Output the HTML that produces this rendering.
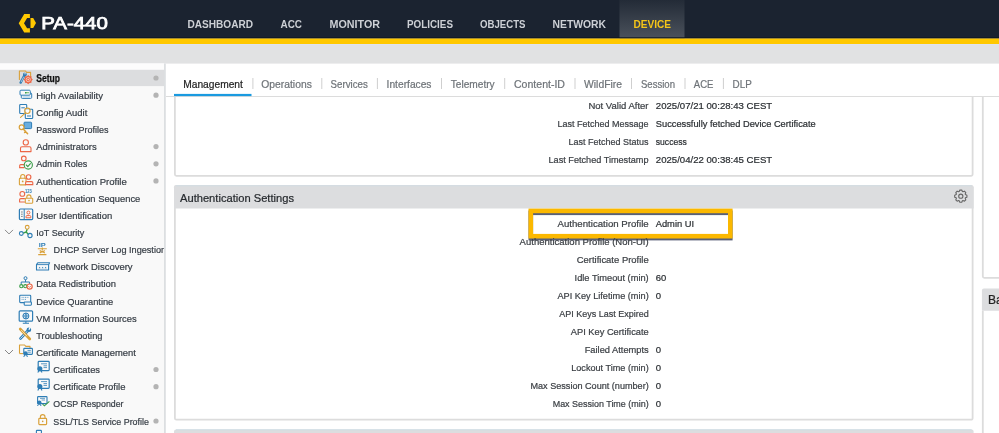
<!DOCTYPE html>
<html><head><meta charset="utf-8"><title>PA-440</title>
<style>html,body{margin:0;padding:0;background:#fff;width:999px;height:433px;overflow:hidden}svg text{font-family:"Liberation Sans", sans-serif}svg{will-change:transform;transform:translateZ(0)}</style>
</head><body><svg width="999" height="433" viewBox="0 0 999 433" style="display:block"><rect x="0" y="0" width="999" height="38.5" fill="#1b2330"/>
<defs><linearGradient id="devg" x1="0" y1="0" x2="0" y2="1"><stop offset="0" stop-color="#232b37"/><stop offset="1" stop-color="#4b525c"/></linearGradient></defs>
<rect x="619.5" y="0" width="65" height="38.5" fill="url(#devg)"/>
<rect x="0" y="37.3" width="999" height="1.2" fill="#0f1726"/>
<rect x="0" y="38.5" width="999" height="5.5" fill="#ffc800"/>
<rect x="0" y="44" width="999" height="1" fill="#dfe3ee"/>
<rect x="0" y="45" width="999" height="18.6" fill="#e1e2e3"/>
<polygon points="24.2,14 29.9,14 29.9,18.1 27.1,18.1 24,23.2 27.1,28.2 29.9,28.2 29.9,32.6 24.2,32.6 18.7,23.2" fill="#ffc800"/>
<polygon points="30.5,18 33.2,18 36,23.1 33.2,28.1 30.5,28.1" fill="#ffc800"/>
<text x="41.2" y="29.0" font-size="16.0" fill="#ffffff" text-anchor="start" textLength="66.6" lengthAdjust="spacingAndGlyphs" stroke="#fff" stroke-width="0.75">PA-440</text>
<text x="187.4" y="28.4" font-size="11.0" fill="#cdd0d5" text-anchor="start" textLength="65.6" lengthAdjust="spacingAndGlyphs" font-weight="bold">DASHBOARD</text>
<text x="280.5" y="28.4" font-size="11.0" fill="#cdd0d5" text-anchor="start" textLength="21.5" lengthAdjust="spacingAndGlyphs" font-weight="bold">ACC</text>
<text x="329.5" y="28.4" font-size="11.0" fill="#cdd0d5" text-anchor="start" textLength="50.5" lengthAdjust="spacingAndGlyphs" font-weight="bold">MONITOR</text>
<text x="407" y="28.4" font-size="11.0" fill="#cdd0d5" text-anchor="start" textLength="46.0" lengthAdjust="spacingAndGlyphs" font-weight="bold">POLICIES</text>
<text x="480" y="28.4" font-size="11.0" fill="#cdd0d5" text-anchor="start" textLength="45.5" lengthAdjust="spacingAndGlyphs" font-weight="bold">OBJECTS</text>
<text x="552.5" y="28.4" font-size="11.0" fill="#cdd0d5" text-anchor="start" textLength="53.5" lengthAdjust="spacingAndGlyphs" font-weight="bold">NETWORK</text>
<text x="633.4" y="28.4" font-size="11.0" fill="#f5c518" text-anchor="start" textLength="37.6" lengthAdjust="spacingAndGlyphs" font-weight="bold">DEVICE</text>
<rect x="0" y="63.6" width="164" height="370" fill="#f9f9f9"/>
<rect x="0" y="63.6" width="164" height="6.4" fill="#fcfcfc"/>
<rect x="164" y="63.6" width="1.8" height="370" fill="#dcdfe1"/>
<rect x="0" y="69.8" width="164" height="16.3" fill="#dcdddf"/>
<clipPath id="sbclip"><rect x="0" y="63" width="164" height="370"/></clipPath>
<g clip-path="url(#sbclip)">
<text x="36.2" y="81.6" font-size="10" fill="#111111" text-anchor="start" textLength="23.8" lengthAdjust="spacingAndGlyphs" font-weight="bold" stroke="#111" stroke-width="0.25">Setup</text>
<circle cx="156" cy="78.0" r="2.6" fill="#b4b4b4"/>
<text x="36.3" y="98.75" font-size="9.9" fill="#363d45" text-anchor="start" textLength="66.7" lengthAdjust="spacingAndGlyphs" stroke="#363d45" stroke-width="0.22">High Availability</text>
<circle cx="156" cy="95.2" r="2.6" fill="#b4b4b4"/>
<text x="36.3" y="115.89999999999999" font-size="9.9" fill="#363d45" text-anchor="start" textLength="51.0" lengthAdjust="spacingAndGlyphs" stroke="#363d45" stroke-width="0.22">Config Audit</text>
<text x="36.3" y="133.04999999999998" font-size="9.9" fill="#363d45" text-anchor="start" textLength="72.2" lengthAdjust="spacingAndGlyphs" stroke="#363d45" stroke-width="0.22">Password Profiles</text>
<text x="36.3" y="150.2" font-size="9.9" fill="#363d45" text-anchor="start" textLength="60.4" lengthAdjust="spacingAndGlyphs" stroke="#363d45" stroke-width="0.22">Administrators</text>
<circle cx="156" cy="146.6" r="2.6" fill="#b4b4b4"/>
<text x="36.3" y="167.35" font-size="9.9" fill="#363d45" text-anchor="start" textLength="51.0" lengthAdjust="spacingAndGlyphs" stroke="#363d45" stroke-width="0.22">Admin Roles</text>
<circle cx="156" cy="163.8" r="2.6" fill="#b4b4b4"/>
<text x="36.3" y="184.5" font-size="9.9" fill="#363d45" text-anchor="start" textLength="90.5" lengthAdjust="spacingAndGlyphs" stroke="#363d45" stroke-width="0.22">Authentication Profile</text>
<circle cx="156" cy="180.9" r="2.6" fill="#b4b4b4"/>
<text x="36.3" y="201.64999999999998" font-size="9.9" fill="#363d45" text-anchor="start" textLength="104.0" lengthAdjust="spacingAndGlyphs" stroke="#363d45" stroke-width="0.22">Authentication Sequence</text>
<text x="36.3" y="218.79999999999998" font-size="9.9" fill="#363d45" text-anchor="start" textLength="76.0" lengthAdjust="spacingAndGlyphs" stroke="#363d45" stroke-width="0.22">User Identification</text>
<text x="36.3" y="235.95" font-size="9.9" fill="#363d45" text-anchor="start" textLength="47.9" lengthAdjust="spacingAndGlyphs" stroke="#363d45" stroke-width="0.22">IoT Security</text>
<text x="53.6" y="253.1" font-size="9.9" fill="#363d45" text-anchor="start" textLength="112.5" lengthAdjust="spacingAndGlyphs" stroke="#363d45" stroke-width="0.22">DHCP Server Log Ingestion</text>
<text x="53.6" y="270.25" font-size="9.9" fill="#363d45" text-anchor="start" textLength="79.0" lengthAdjust="spacingAndGlyphs" stroke="#363d45" stroke-width="0.22">Network Discovery</text>
<text x="36.3" y="287.4" font-size="9.9" fill="#363d45" text-anchor="start" textLength="79.7" lengthAdjust="spacingAndGlyphs" stroke="#363d45" stroke-width="0.22">Data Redistribution</text>
<text x="36.3" y="304.54999999999995" font-size="9.9" fill="#363d45" text-anchor="start" textLength="77.0" lengthAdjust="spacingAndGlyphs" stroke="#363d45" stroke-width="0.22">Device Quarantine</text>
<text x="36.3" y="321.69999999999993" font-size="9.9" fill="#363d45" text-anchor="start" textLength="100.3" lengthAdjust="spacingAndGlyphs" stroke="#363d45" stroke-width="0.22">VM Information Sources</text>
<text x="36.3" y="338.85" font-size="9.9" fill="#363d45" text-anchor="start" textLength="66.2" lengthAdjust="spacingAndGlyphs" stroke="#363d45" stroke-width="0.22">Troubleshooting</text>
<text x="36.3" y="356.0" font-size="9.9" fill="#363d45" text-anchor="start" textLength="99.6" lengthAdjust="spacingAndGlyphs" stroke="#363d45" stroke-width="0.22">Certificate Management</text>
<text x="53.3" y="373.15" font-size="9.9" fill="#363d45" text-anchor="start" textLength="46.7" lengthAdjust="spacingAndGlyphs" stroke="#363d45" stroke-width="0.22">Certificates</text>
<circle cx="156" cy="369.5" r="2.6" fill="#b4b4b4"/>
<text x="53.3" y="390.29999999999995" font-size="9.9" fill="#363d45" text-anchor="start" textLength="72.2" lengthAdjust="spacingAndGlyphs" stroke="#363d45" stroke-width="0.22">Certificate Profile</text>
<circle cx="156" cy="386.7" r="2.6" fill="#b4b4b4"/>
<text x="53.3" y="407.44999999999993" font-size="9.9" fill="#363d45" text-anchor="start" textLength="70.2" lengthAdjust="spacingAndGlyphs" stroke="#363d45" stroke-width="0.22">OCSP Responder</text>
<text x="53.3" y="424.6" font-size="9.9" fill="#363d45" text-anchor="start" textLength="95.7" lengthAdjust="spacingAndGlyphs" stroke="#363d45" stroke-width="0.22">SSL/TLS Service Profile</text>
<circle cx="156" cy="421.0" r="2.6" fill="#b4b4b4"/>
<path d="M19.4,79.5 V71 H25.5 L26.6,72.4 H30.6 V76.5" stroke="#d9a13a" stroke-width="1.1" fill="none" stroke-linecap="round" stroke-linejoin="round"/>
<path d="M24.3,75.5 L20.6,82.6" stroke="#2e7db5" stroke-width="2.4" stroke-linecap="round" fill="none"/>
<path d="M23.6,77 L21.2,81.8" stroke="#dce8f0" stroke-width="0.7" stroke-linecap="round" fill="none"/>
<circle cx="24.9" cy="74.4" r="1.9" fill="#2e7db5"/>
<path d="M25.2,72.2 L24.9,74.4" stroke="#dcdcdc" stroke-width="1.1"/>
<polygon points="32.80,79.60 31.53,80.98 31.45,82.85 29.58,82.93 28.20,84.20 26.82,82.93 24.95,82.85 24.87,80.98 23.60,79.60 24.87,78.22 24.95,76.35 26.82,76.27 28.20,75.00 29.58,76.27 31.45,76.35 31.53,78.22" fill="#ec6646"/>
<circle cx="28.2" cy="79.6" r="2.1" fill="none" stroke="#fbd0c4" stroke-width="0.8"/>
<circle cx="28.2" cy="79.6" r="0.8" fill="#fbd0c4"/>
<rect x="21.3" y="93" width="10.4" height="5.4" rx="1" fill="#f9f9f9" stroke="#2e7db5" stroke-width="1"/>
<path d="M22.6,96.9 H30.4" stroke="#9cc3df" stroke-width="0.8"/>
<rect x="20" y="90.2" width="10.3" height="5" rx="1" fill="#f9f9f9" stroke="#2e7db5" stroke-width="1"/>
<rect x="25" y="92.1" width="4" height="1.2" fill="#7cc27f"/>
<rect x="25" y="92" width="1.4" height="1.4" fill="#3a9d4a"/>
<rect x="19.7" y="104.5" width="7" height="9" rx="0.8" stroke="#2e7db5" stroke-width="1.1" fill="none" stroke-linecap="round" stroke-linejoin="round"/>
<rect x="21.3" y="107.3" width="3.5" height="1" fill="#2e7db5"/>
<rect x="25.3" y="109.3" width="7.4" height="9.2" rx="0.8" fill="#f9f9f9" stroke="#2e7db5" stroke-width="1.1"/>
<rect x="27" y="115.5" width="4" height="1" fill="#2e7db5"/>
<circle cx="27.4" cy="110.8" r="2.7" fill="#fff" fill-opacity="0.7" stroke="#d9a13a" stroke-width="1.1"/>
<path d="M25.5,112.8 L20.5,117.4" stroke="#d9a13a" stroke-width="1.1" fill="none" stroke-linecap="round" stroke-linejoin="round"/>
<rect x="24" y="122.2" width="7.6" height="6.4" rx="0.8" fill="#6aaee0" stroke="#2e7db5" stroke-width="1"/>
<circle cx="21.6" cy="127.2" r="2.4" fill="#f9f9f9" stroke="#d9a13a" stroke-width="1.2"/>
<path d="M23.3,128.9 L27.6,133.8 M25.6,131.3 L24.6,132.4" stroke="#d9a13a" stroke-width="1.5" fill="none" stroke-linecap="round"/>
<circle cx="25.8" cy="142.4" r="2.6" stroke="#ec6646" stroke-width="1.1" fill="none" stroke-linecap="round" stroke-linejoin="round"/>
<path d="M20.5,151.6 V148.2 Q20.5,146.8 22,146.8 H29.6 Q31,146.8 31,148.2 V151.6 Z" stroke="#ec6646" stroke-width="1.1" fill="none" stroke-linecap="round" stroke-linejoin="round"/>
<circle cx="23.8" cy="158.4" r="2.3" stroke="#ec6646" stroke-width="1.1" fill="none" stroke-linecap="round" stroke-linejoin="round"/>
<path d="M19.7,167.6 V165.6 Q19.7,164.6 20.8,164.6 H25" stroke="#ec6646" stroke-width="1.1" fill="none" stroke-linecap="round" stroke-linejoin="round"/>
<path d="M19.7,167.6 H24.2" stroke="#ec6646" stroke-width="1.1" fill="none" stroke-linecap="round" stroke-linejoin="round"/>
<circle cx="28.3" cy="165" r="4.1" fill="#f9f9f9" stroke="#3a9d4a" stroke-width="1.1"/>
<path d="M26.3,165 L27.8,166.6 L30.4,163.6" stroke="#3a9d4a" stroke-width="1.1" fill="none" stroke-linecap="round" stroke-linejoin="round"/>
<path d="M20.7,178.3 V176.6 A2.1,2.1 0 0 1 24.9,176.6 V178.3" stroke="#d9a13a" stroke-width="1.1" fill="none" stroke-linecap="round" stroke-linejoin="round"/>
<rect x="19.4" y="178.3" width="6.6" height="6.6" rx="0.6" stroke="#d9a13a" stroke-width="1.1" fill="none" stroke-linecap="round" stroke-linejoin="round"/>
<circle cx="22.7" cy="181.4" r="0.9" fill="#d9a13a"/>
<circle cx="28.6" cy="177" r="2.3" stroke="#ec6646" stroke-width="1.1" fill="none" stroke-linecap="round" stroke-linejoin="round"/>
<path d="M25.6,184.6 V182.8 Q25.6,181.6 26.8,181.6 H31.6 Q32.8,181.6 32.8,182.8 V184.6 Z" fill="#f9f9f9" stroke="#ec6646" stroke-width="1.1"/>
<circle cx="22.3" cy="193.9" r="2.4" stroke="#ec6646" stroke-width="1.1" fill="none" stroke-linecap="round" stroke-linejoin="round"/>
<path d="M24.5,198.6 H20.8 Q19.6,198.6 19.6,199.8 V202 H24.5" stroke="#ec6646" stroke-width="1.1" fill="none" stroke-linecap="round" stroke-linejoin="round"/>
<path d="M26.8,198.2 V197 A2.1,2.1 0 0 1 31,197 V198.2" stroke="#d9a13a" stroke-width="1.1" fill="none" stroke-linecap="round" stroke-linejoin="round"/>
<rect x="25.3" y="198.2" width="7.4" height="5" rx="0.6" fill="#f9f9f9" stroke="#d9a13a" stroke-width="1.1"/>
<circle cx="29" cy="200.6" r="0.8" fill="#d9a13a"/>
<text x="25" y="193.4" font-size="5" font-weight="bold" fill="#2e7db5" textLength="6.8" lengthAdjust="spacingAndGlyphs">123</text>
<rect x="19.4" y="209" width="13.3" height="10.6" rx="1" stroke="#2e7db5" stroke-width="1.2" fill="none"/>
<path d="M24.2,209 V219.6" stroke="#2e7db5" stroke-width="1"/>
<path d="M21.2,212 H22.6 M21.2,214.2 H22.6 M21.2,216.4 H22.6" stroke="#3a4a5a" stroke-width="0.8"/>
<circle cx="28.4" cy="212.6" r="1.5" stroke="#ec6646" stroke-width="1" fill="none"/>
<path d="M26,217.8 V216.6 Q26,215.6 27,215.6 H29.8 Q30.8,215.6 30.8,216.6 V217.8 Z" stroke="#ec6646" stroke-width="1" fill="none"/>
<path d="M26.2,232 L27.2,229 M26.2,232 L22.4,233.3 M26.2,232 L28.6,234.6" stroke="#3a9d4a" stroke-width="1.4"/>
<circle cx="27.2" cy="227.3" r="1.9" fill="#f9f9f9" stroke="#d9a13a" stroke-width="1.1"/>
<circle cx="21.3" cy="233.5" r="1.9" fill="#f9f9f9" stroke="#2e7db5" stroke-width="1.1"/>
<circle cx="30" cy="235.5" r="2.1" fill="#f9f9f9" stroke="#2e7db5" stroke-width="1.1"/>
<text x="38.8" y="247" font-size="5.5" font-weight="bold" fill="#2e7db5" textLength="7" lengthAdjust="spacingAndGlyphs">IP</text>
<path d="M37.8,248.8 H46.8 M42.3,247.5 V250.5 M39.8,250.5 Q42.3,252.8 44.8,250.5 M39.8,253 Q42.3,250.6 44.8,253 M38.2,254.6 H46.4" stroke="#d9a13a" stroke-width="1.1" fill="none"/>
<path d="M37.8,262.8 H49.6 L48.6,264.8 V270 H36.5 V264.6 Z" stroke="#2e7db5" stroke-width="1.1" fill="none" stroke-linejoin="round"/>
<path d="M37,264.6 H48.6" stroke="#2e7db5" stroke-width="0.9"/>
<path d="M38.6,268.2 L39.6,266.8 L40.6,268.2 Z" fill="#2e7db5"/>
<path d="M41.6,268.2 L42.6,266.8 L43.6,268.2 Z" fill="#2e7db5"/>
<path d="M44.6,268.2 L45.6,266.8 L46.6,268.2 Z" fill="#2e7db5"/>
<circle cx="25.5" cy="278.2" r="1.5" fill="#f9f9f9" stroke="#2e7db5" stroke-width="1"/>
<path d="M25.5,279.7 V282 M21.2,284.2 V282 H29.6 V284" stroke="#2e7db5" stroke-width="1" fill="none"/>
<circle cx="21.3" cy="286.2" r="1.6" fill="none" stroke="#3a9d4a" stroke-width="1.1"/>
<circle cx="25.3" cy="286.2" r="1.6" fill="none" stroke="#3a9d4a" stroke-width="1.1"/>
<circle cx="29.6" cy="286.6" r="2.6" fill="#f9f9f9" stroke="#ec6646" stroke-width="1.2"/>
<path d="M28.4,286.2 L29.6,287.4 L30.8,286.2" stroke="#ec6646" stroke-width="0.9" fill="none"/>
<rect x="19.7" y="295.2" width="11" height="7.4" rx="0.8" stroke="#2e7db5" stroke-width="1.1" fill="none"/>
<path d="M21.6,297.4 H28.8 M21.6,299.4 H26" stroke="#2e7db5" stroke-width="0.7" stroke-dasharray="1,0.7"/>
<rect x="24.2" y="302" width="7.2" height="3.2" rx="0.6" fill="#f9f9f9" stroke="#2e7db5" stroke-width="1.1"/>
<rect x="19.2" y="310.8" width="13.4" height="10.4" rx="1" stroke="#2e7db5" stroke-width="1.2" fill="none"/>
<path d="M25.9,321.2 V323 M22.8,323.2 H29" stroke="#2e7db5" stroke-width="1.1"/>
<circle cx="25.9" cy="316" r="3" stroke="#2e7db5" stroke-width="1" fill="#cfe4f3"/>
<path d="M22.9,316 H28.9 M25.9,313 Q24.2,316 25.9,319 Q27.6,316 25.9,313" stroke="#2e7db5" stroke-width="0.7" fill="none"/>
<path d="M20.6,338.4 L27.6,331" stroke="#2e7db5" stroke-width="2.8" stroke-linecap="round"/>
<path d="M20.6,338.4 L27.6,331" stroke="#cfe3f2" stroke-width="1" stroke-linecap="round"/>
<circle cx="28.9" cy="329.8" r="2.3" fill="#2e7db5"/>
<path d="M30.2,327.2 L28.9,329.8" stroke="#f9f9f9" stroke-width="1.3"/>
<path d="M20.2,329 L29.8,339" stroke="#d9a13a" stroke-width="2.6" stroke-linecap="round"/>
<path d="M21.4,330.3 L26.8,335.9" stroke="#f6e2b8" stroke-width="0.9" stroke-linecap="round"/>
<path d="M19.5,353.6 V345 H24.6 L25.8,346.4 H30 V348" stroke="#d9a13a" stroke-width="1.1" fill="none" stroke-linejoin="round"/>
<path d="M19.5,353.6 H23" stroke="#d9a13a" stroke-width="1.1"/>
<rect x="23.8" y="348.4" width="8.6" height="6" rx="0.6" fill="#f9f9f9" stroke="#2e7db5" stroke-width="1.1"/>
<path d="M27.5,350.4 H30.8 M27.5,352.2 H30.8" stroke="#2e7db5" stroke-width="0.8"/>
<circle cx="25.6" cy="353.4" r="2.1" fill="#2e7db5"/>
<path d="M24.6,355 L23.8,357 M26.6,355 L27.4,357" stroke="#2e7db5" stroke-width="1"/>
<rect x="38.2" y="361.4" width="11" height="9.2" rx="0.8" fill="none" stroke="#2e7db5" stroke-width="1.2"/>
<path d="M41,363.79999999999995 H47 M43.5,365.79999999999995 H47 M43.5,367.59999999999997 H47" stroke="#2e7db5" stroke-width="0.8"/>
<circle cx="39.9" cy="368.79999999999995" r="2.5" fill="#2e7db5"/>
<path d="M38.8,370.79999999999995 L37.8,372.59999999999997 M41,370.79999999999995 L42,372.59999999999997" stroke="#2e7db5" stroke-width="1.1"/>
<rect x="38.2" y="379.2" width="11" height="9.2" rx="0.8" fill="none" stroke="#2e7db5" stroke-width="1.2"/>
<path d="M41,381.59999999999997 H47 M43.5,383.59999999999997 H47 M43.5,385.4 H47" stroke="#2e7db5" stroke-width="0.8"/>
<circle cx="39.9" cy="386.59999999999997" r="2.5" fill="#2e7db5"/>
<path d="M38.8,388.59999999999997 L37.8,390.4 M41,388.59999999999997 L42,390.4" stroke="#2e7db5" stroke-width="1.1"/>
<rect x="37.6" y="396.6" width="9.4" height="7" rx="0.6" fill="none" stroke="#2e7db5" stroke-width="1.1"/>
<path d="M40,398.4 H45 M41.6,400 H45" stroke="#2e7db5" stroke-width="0.7"/>
<circle cx="39.3" cy="402.6" r="2.2" fill="#2e7db5"/>
<path d="M38.3,404.4 L37.6,406 M40.3,404.4 L41,406" stroke="#2e7db5" stroke-width="1"/>
<path d="M42.6,404.2 L44.4,405.8 L49.4,401.4" stroke="#3a9d4a" stroke-width="1.1" fill="none"/>
<path d="M40.4,418.4 V416.9 A2.3,2.3 0 0 1 45,416.9 V418.4" stroke="#d9a13a" stroke-width="1.1" fill="none"/>
<rect x="38.8" y="418.4" width="7.8" height="6.2" rx="0.8" fill="none" stroke="#d9a13a" stroke-width="1.2"/>
<circle cx="42.7" cy="421.4" r="0.8" fill="#d9a13a"/>
<rect x="36.4" y="430.4" width="5" height="5" rx="0.6" fill="none" stroke="#2e7db5" stroke-width="1.1"/>
</g>
<polyline points="5,229.9 9,233.9 13,229.9" fill="none" stroke="#888" stroke-width="1"/>
<polyline points="5,350.0 9,354.0 13,350.0" fill="none" stroke="#888" stroke-width="1"/>
<text x="183.2" y="88" font-size="11" fill="#1f1f1f" text-anchor="start" textLength="59.7" lengthAdjust="spacingAndGlyphs" stroke="#1f1f1f" stroke-width="0.22">Management</text>
<text x="261.3" y="88" font-size="11" fill="#6e7378" text-anchor="start" textLength="50.5" lengthAdjust="spacingAndGlyphs" stroke="#6e7378" stroke-width="0.22">Operations</text>
<text x="330.6" y="88" font-size="11" fill="#6e7378" text-anchor="start" textLength="37.2" lengthAdjust="spacingAndGlyphs" stroke="#6e7378" stroke-width="0.22">Services</text>
<text x="386.6" y="88" font-size="11" fill="#6e7378" text-anchor="start" textLength="44.9" lengthAdjust="spacingAndGlyphs" stroke="#6e7378" stroke-width="0.22">Interfaces</text>
<text x="450.7" y="88" font-size="11" fill="#6e7378" text-anchor="start" textLength="44.0" lengthAdjust="spacingAndGlyphs" stroke="#6e7378" stroke-width="0.22">Telemetry</text>
<text x="514" y="88" font-size="11" fill="#6e7378" text-anchor="start" textLength="51.0" lengthAdjust="spacingAndGlyphs" stroke="#6e7378" stroke-width="0.22">Content-ID</text>
<text x="584" y="88" font-size="11" fill="#6e7378" text-anchor="start" textLength="38.0" lengthAdjust="spacingAndGlyphs" stroke="#6e7378" stroke-width="0.22">WildFire</text>
<text x="641" y="88" font-size="11" fill="#6e7378" text-anchor="start" textLength="34.0" lengthAdjust="spacingAndGlyphs" stroke="#6e7378" stroke-width="0.22">Session</text>
<text x="693.8" y="88" font-size="11" fill="#6e7378" text-anchor="start" textLength="19.6" lengthAdjust="spacingAndGlyphs" stroke="#6e7378" stroke-width="0.22">ACE</text>
<text x="732.6" y="88" font-size="11" fill="#6e7378" text-anchor="start" textLength="19.2" lengthAdjust="spacingAndGlyphs" stroke="#6e7378" stroke-width="0.22">DLP</text>
<rect x="252.4" y="78" width="1" height="11" fill="#cfcfcf"/>
<rect x="321.3" y="78" width="1" height="11" fill="#cfcfcf"/>
<rect x="376.9" y="78" width="1" height="11" fill="#cfcfcf"/>
<rect x="441.0" y="78" width="1" height="11" fill="#cfcfcf"/>
<rect x="504.2" y="78" width="1" height="11" fill="#cfcfcf"/>
<rect x="574.5" y="78" width="1" height="11" fill="#cfcfcf"/>
<rect x="631.0" y="78" width="1" height="11" fill="#cfcfcf"/>
<rect x="684.5" y="78" width="1" height="11" fill="#cfcfcf"/>
<rect x="722.9" y="78" width="1" height="11" fill="#cfcfcf"/>
<rect x="166" y="96" width="833" height="1" fill="#dcdcdc"/>
<rect x="174" y="93.9" width="77.5" height="2.2" fill="#1a9ae0"/>
<path d="M174.9,97 V174.3 a1.5,1.5 0 0 0 1.5,1.5 H971.1 a1.5,1.5 0 0 0 1.5,-1.5 V97" fill="#fff" stroke="#dcdcdc" stroke-width="1.8"/>
<path d="M982.8,97 V276.3 a1.5,1.5 0 0 0 1.5,1.5 H1000" fill="#fff" stroke="#dcdcdc" stroke-width="1.8"/>
<path d="M981.9,290.4 a2,2 0 0 1 2,-2 H999 V310.8 H981.9 Z" fill="#dcdddf"/>
<path d="M982.8,310.8 V433" stroke="#dcdcdc" stroke-width="1.8"/>
<text x="988" y="304" font-size="12" fill="#222" text-anchor="start" stroke="#222" stroke-width="0.22">Ba</text>
<text x="648.5" y="108.7" font-size="9.7" fill="#3b3f44" text-anchor="end" textLength="60.1" lengthAdjust="spacingAndGlyphs" stroke="#3b3f44" stroke-width="0.22">Not Valid After</text>
<text x="655.8" y="108.7" font-size="9.7" fill="#2b2f33" text-anchor="start" textLength="116.4" lengthAdjust="spacingAndGlyphs" stroke="#2b2f33" stroke-width="0.22">2025/07/21 00:28:43 CEST</text>
<text x="648.5" y="126.7" font-size="9.7" fill="#3b3f44" text-anchor="end" textLength="91.1" lengthAdjust="spacingAndGlyphs" stroke="#3b3f44" stroke-width="0.22">Last Fetched Message</text>
<text x="655.8" y="126.7" font-size="9.7" fill="#2b2f33" text-anchor="start" textLength="159.9" lengthAdjust="spacingAndGlyphs" stroke="#2b2f33" stroke-width="0.22">Successfully fetched Device Certificate</text>
<text x="648.5" y="144.7" font-size="9.7" fill="#3b3f44" text-anchor="end" textLength="80.1" lengthAdjust="spacingAndGlyphs" stroke="#3b3f44" stroke-width="0.22">Last Fetched Status</text>
<text x="655.8" y="144.7" font-size="9.7" fill="#2b2f33" text-anchor="start" textLength="31.0" lengthAdjust="spacingAndGlyphs" stroke="#2b2f33" stroke-width="0.22">success</text>
<text x="648.5" y="162.7" font-size="9.7" fill="#3b3f44" text-anchor="end" textLength="100.0" lengthAdjust="spacingAndGlyphs" stroke="#3b3f44" stroke-width="0.22">Last Fetched Timestamp</text>
<text x="655.8" y="162.7" font-size="9.7" fill="#2b2f33" text-anchor="start" textLength="116.4" lengthAdjust="spacingAndGlyphs" stroke="#2b2f33" stroke-width="0.22">2025/04/22 00:38:45 CEST</text>
<path d="M174.9,187.5 a1.5,1.5 0 0 1 1.5,-1.5 H971.1 a1.5,1.5 0 0 1 1.5,1.5 V418.2 a1.5,1.5 0 0 1 -1.5,1.5 H176.4 a1.5,1.5 0 0 1 -1.5,-1.5 Z" fill="#fff" stroke="#dcdcdc" stroke-width="1.8"/>
<path d="M174,187.3 a2,2 0 0 1 2,-2 H971.6 a2,2 0 0 1 2,2 V208.4 H174 Z" fill="#dcdddf"/>
<path d="M176,185.8 H971.6" stroke="#d3dde4" stroke-width="0.9"/>
<text x="180" y="201.5" font-size="11.6" fill="#262a2e" text-anchor="start" textLength="114.0" lengthAdjust="spacingAndGlyphs" stroke="#262a2e" stroke-width="0.22">Authentication Settings</text>
<polygon points="965.43,194.60 966.92,195.23 966.92,197.17 965.43,197.80 965.20,198.35 965.82,199.84 964.44,201.22 962.95,200.60 962.40,200.83 961.77,202.32 959.83,202.32 959.20,200.83 958.65,200.60 957.16,201.22 955.78,199.84 956.40,198.35 956.17,197.80 954.68,197.17 954.68,195.23 956.17,194.60 956.40,194.05 955.78,192.56 957.16,191.18 958.65,191.80 959.20,191.57 959.83,190.08 961.77,190.08 962.40,191.57 962.95,191.80 964.44,191.18 965.82,192.56 965.20,194.05" fill="none" stroke="#666" stroke-width="1.1" stroke-linejoin="round"/>
<circle cx="960.8" cy="196.2" r="2.1" fill="none" stroke="#666" stroke-width="1.1"/>
<filter id="blur" x="-10%" y="-50%" width="120%" height="200%"><feGaussianBlur stdDeviation="0.5"/></filter>
<rect x="530.8" y="212.8" width="199.5" height="25.3" fill="none" stroke="#46506a" stroke-opacity="0.9" stroke-width="4.6" filter="url(#blur)"/>
<rect x="530.8" y="210.9" width="199.5" height="25.3" fill="none" stroke="#fbb800" stroke-width="4.6"/>
<text x="648.7" y="226.9" font-size="9.7" fill="#3b3f44" text-anchor="end" textLength="91.2" lengthAdjust="spacingAndGlyphs" stroke="#3b3f44" stroke-width="0.22">Authentication Profile</text>
<text x="655.7" y="226.9" font-size="9.7" fill="#2b2f33" text-anchor="start" textLength="38.4" lengthAdjust="spacingAndGlyphs" stroke="#2b2f33" stroke-width="0.22">Admin UI</text>
<text x="648.7" y="244.9" font-size="9.7" fill="#3b3f44" text-anchor="end" textLength="129.1" lengthAdjust="spacingAndGlyphs" stroke="#3b3f44" stroke-width="0.22">Authentication Profile (Non-UI)</text>
<text x="648.7" y="262.9" font-size="9.7" fill="#3b3f44" text-anchor="end" textLength="72.0" lengthAdjust="spacingAndGlyphs" stroke="#3b3f44" stroke-width="0.22">Certificate Profile</text>
<text x="648.7" y="280.9" font-size="9.7" fill="#3b3f44" text-anchor="end" textLength="74.1" lengthAdjust="spacingAndGlyphs" stroke="#3b3f44" stroke-width="0.22">Idle Timeout (min)</text>
<text x="655.7" y="280.9" font-size="9.7" fill="#2b2f33" text-anchor="start" textLength="10.5" lengthAdjust="spacingAndGlyphs" stroke="#2b2f33" stroke-width="0.22">60</text>
<text x="648.7" y="298.9" font-size="9.7" fill="#3b3f44" text-anchor="end" textLength="91.2" lengthAdjust="spacingAndGlyphs" stroke="#3b3f44" stroke-width="0.22">API Key Lifetime (min)</text>
<text x="655.7" y="298.9" font-size="9.7" fill="#2b2f33" text-anchor="start" textLength="5.3" lengthAdjust="spacingAndGlyphs" stroke="#2b2f33" stroke-width="0.22">0</text>
<text x="648.7" y="316.9" font-size="9.7" fill="#3b3f44" text-anchor="end" textLength="89.4" lengthAdjust="spacingAndGlyphs" stroke="#3b3f44" stroke-width="0.22">API Keys Last Expired</text>
<text x="648.7" y="334.9" font-size="9.7" fill="#3b3f44" text-anchor="end" textLength="77.9" lengthAdjust="spacingAndGlyphs" stroke="#3b3f44" stroke-width="0.22">API Key Certificate</text>
<text x="648.7" y="352.9" font-size="9.7" fill="#3b3f44" text-anchor="end" textLength="64.0" lengthAdjust="spacingAndGlyphs" stroke="#3b3f44" stroke-width="0.22">Failed Attempts</text>
<text x="655.7" y="352.9" font-size="9.7" fill="#2b2f33" text-anchor="start" textLength="5.3" lengthAdjust="spacingAndGlyphs" stroke="#2b2f33" stroke-width="0.22">0</text>
<text x="648.7" y="370.9" font-size="9.7" fill="#3b3f44" text-anchor="end" textLength="77.5" lengthAdjust="spacingAndGlyphs" stroke="#3b3f44" stroke-width="0.22">Lockout Time (min)</text>
<text x="655.7" y="370.9" font-size="9.7" fill="#2b2f33" text-anchor="start" textLength="5.3" lengthAdjust="spacingAndGlyphs" stroke="#2b2f33" stroke-width="0.22">0</text>
<text x="648.7" y="388.9" font-size="9.7" fill="#3b3f44" text-anchor="end" textLength="118.2" lengthAdjust="spacingAndGlyphs" stroke="#3b3f44" stroke-width="0.22">Max Session Count (number)</text>
<text x="655.7" y="388.9" font-size="9.7" fill="#2b2f33" text-anchor="start" textLength="5.3" lengthAdjust="spacingAndGlyphs" stroke="#2b2f33" stroke-width="0.22">0</text>
<text x="648.7" y="406.9" font-size="9.7" fill="#3b3f44" text-anchor="end" textLength="96.0" lengthAdjust="spacingAndGlyphs" stroke="#3b3f44" stroke-width="0.22">Max Session Time (min)</text>
<text x="655.7" y="406.9" font-size="9.7" fill="#2b2f33" text-anchor="start" textLength="5.3" lengthAdjust="spacingAndGlyphs" stroke="#2b2f33" stroke-width="0.22">0</text>
<path d="M174,433 V431.4 a2,2 0 0 1 2,-2 H971.6 a2,2 0 0 1 2,2 V433 Z" fill="#dcdddf"/>
<path d="M176,429.8 H971.6" stroke="#cddbe4" stroke-width="0.9"/></svg></body></html>
